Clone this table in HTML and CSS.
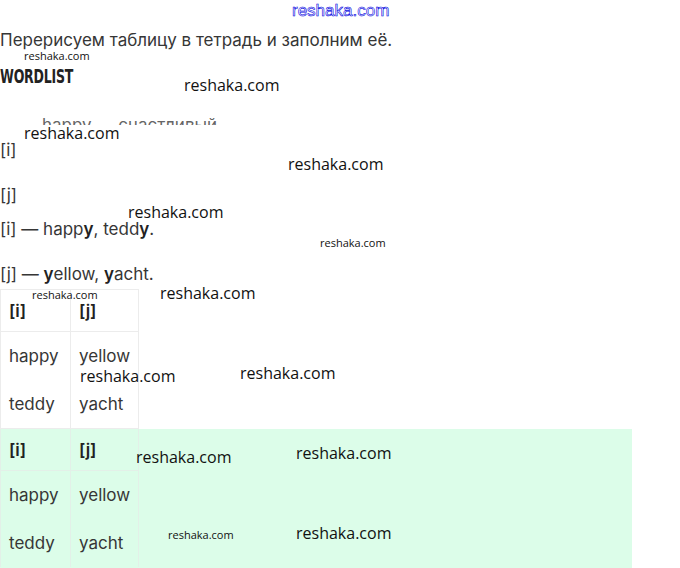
FILE: index.html
```html
<!DOCTYPE html>
<html>

<head>
    <meta charset="utf-8">
    <meta name="viewport" content="width=device-width, initial-scale=1.0">
    <title>WORDLIST</title>
    <link rel="stylesheet" href="styles.css">
</head>

<body>
    <div class="page">
        <p class="lead">Перерисуем таблицу в тетрадь и заполним её.</p>
        <h3 class="title"><span>WORDLIST</span></h3>
        <div class="cut"><span>happy — счастливый</span></div>

        <p class="line">[i]</p>
        <p class="line tight">[j]</p>
        <p class="line">[i] — happ<b>y</b>, tedd<b>y</b>.</p>
        <p class="line last">[j] — <b>y</b>ellow, <b>y</b>acht.</p>

        <table class="words">
            <tr class="head">
                <th>[i]</th>
                <th>[j]</th>
            </tr>
            <tr>
                <td>happy</td>
                <td>yellow</td>
            </tr>
            <tr>
                <td>teddy</td>
                <td>yacht</td>
            </tr>
        </table>

        <div class="answer">
            <table class="words">
                <tr class="head">
                    <th>[i]</th>
                    <th>[j]</th>
                </tr>
                <tr>
                    <td>happy</td>
                    <td>yellow</td>
                </tr>
                <tr>
                    <td>teddy</td>
                    <td>yacht</td>
                </tr>
            </table>
        </div>

        <!-- watermarks -->
        <span class="mark blue" style="left:292px; top:2px">reshaka.com</span>
        <span class="mark small" style="left:24px; top:50px">reshaka.com</span>
        <span class="mark" style="left:184px; top:77px">reshaka.com</span>
        <span class="mark" style="left:24px; top:125px">reshaka.com</span>
        <span class="mark" style="left:288px; top:156px">reshaka.com</span>
        <span class="mark" style="left:128px; top:204px">reshaka.com</span>
        <span class="mark small" style="left:320px; top:237px">reshaka.com</span>
        <span class="mark small" style="left:32px; top:289px">reshaka.com</span>
        <span class="mark" style="left:160px; top:285px">reshaka.com</span>
        <span class="mark" style="left:80px; top:368px">reshaka.com</span>
        <span class="mark" style="left:240px; top:365px">reshaka.com</span>
        <span class="mark" style="left:136px; top:449px">reshaka.com</span>
        <span class="mark" style="left:296px; top:445px">reshaka.com</span>
        <span class="mark small" style="left:168px; top:529px">reshaka.com</span>
        <span class="mark" style="left:296px; top:525px">reshaka.com</span>
    </div>
</body>

</html>
```

FILE: styles.css
```css
html, body {
    font-family: Inter, "Noto Sans", sans-serif;
    font-size: 17px;
    color: #363636;
}

body {
    margin: 0;
    padding: 0;
    background: #ffffff;
    overflow: hidden;
}

.page {
    position: relative;
    padding-top: 28px;
}

.lead {
    margin: 0;
    line-height: 24px;
}

.title {
    margin: 12px 0 0 0;
    height: 24px;
    font-family: "DejaVu Sans", sans-serif;
    font-weight: bold;
    font-size: 19px;
    line-height: 24px;
    color: #222222;
    letter-spacing: -0.3px;
}

.title span {
    display: inline-block;
    transform: scaleX(0.66);
    transform-origin: left center;
}

.cut {
    margin: 30px 0 13px 42px;
    height: 7px;
    overflow: hidden;
    line-height: 24px;
    color: #666666;
}

.cut span {
    display: block;
    margin-top: -5px;
}

.line {
    margin: 0 0 21px 0;
    line-height: 24px;
}

.line.tight {
    margin-bottom: 10px;
}

.line.last {
    margin-bottom: 3px;
}

.line b {
    font-weight: 600;
    color: #222222;
}

.words {
    border-collapse: collapse;
    border: 1px solid #ececec;
}

.words th,
.words td {
    border-left: 1px solid #ececec;
    border-right: 1px solid #ececec;
    padding: 0 8px;
    text-align: left;
    vertical-align: middle;
}

.words th {
    height: 41px;
    font-weight: 600;
    color: #222222;
    border-bottom: 1px solid #ececec;
}

.words td {
    height: 48px;
}

.words th:first-child,
.words td:first-child {
    width: 53px;
}

.words th:last-child,
.words td:last-child {
    width: 51px;
}

.answer {
    width: 632px;
    height: 140px;
    background: #dcfde9;
}

.answer .words {
    border: none;
    border-right: 1px solid #e3f0e8;
}

.answer .words th,
.answer .words td {
    border-color: #e3f0e8;
}

.mark {
    position: absolute;
    font-family: "Open Sans", sans-serif;
    font-size: 16px;
    line-height: 1;
    color: #111111;
    white-space: nowrap;
}

.mark.small {
    font-size: 11px;
}

.mark.blue {
    font-family: "Liberation Sans", sans-serif;
    font-size: 17px;
    color: #ffffff;
    -webkit-text-stroke: 0.6px #0000e0;
}
```
